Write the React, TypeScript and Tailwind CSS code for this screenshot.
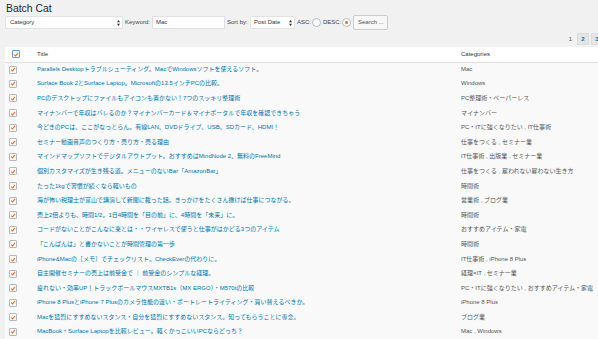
const posts = [
    { title: "Parallels Desktopトラブルシューティング。MacでWindowsソフトを使えるソフト。", cats: "Mac" },
    { title: "Surface Book 2とSurface Laptop。Microsoftの13.5インチPCの比較。", cats: "Windows" },
    { title: "PCのデスクトップにファイルもアイコンも置かない！7つのスッキリ整理術", cats: "PC整理術・ペーパーレス" },
    { title: "マイナンバーで年収はバレるのか？マイナンバーカード＆マイナポータルで年収を確認できちゃう", cats: "マイナンバー" },
    { title: "今どきのPCは、ここがなっとらん。有線LAN、DVDドライブ、USB、SDカード、HDMI！", cats: "PC・ITに強くなりたい , IT仕事術" },
    { title: "セミナー動画音声のつくり方・売り方・売る理由", cats: "仕事をつくる , セミナー業" },
    { title: "マインドマップソフトでデジタルアウトプット。おすすめはMindNode 2、無料のFreeMind", cats: "IT仕事術 , 出版業 , セミナー業" },
    { title: "個別カスタマイズが生き残る道。メニューのないBar「AmazonBar」", cats: "仕事をつくる , 雇われない雇わない生き方" },
    { title: "たった1kgで習慣が続くなら軽いもの", cats: "時間術" },
    { title: "海が怖い税理士が富山で講演して新聞に載った話。きっかけをたくさん撒けば仕事につながる。", cats: "営業術 , ブログ業" },
    { title: "売上2倍よりも、時間1/2。1日4時間を「目の前」に、4時間を「未来」に。", cats: "時間術" },
    { title: "コードがないことがこんなに楽とは・・ワイヤレスで使うと仕事がはかどる3つのアイテム", cats: "おすすめアイテム・家電" },
    { title: "「こんばんは」と書かないことが時間管理の第一歩", cats: "時間術" },
    { title: "iPhone&Macの［メモ］でチェックリスト。CheckEverの代わりに。", cats: "IT仕事術 , iPhone 8 Plus" },
    { title: "自主開催セミナーの売上は前受金で ｜ 前受金のシンプルな経理。", cats: "経理×IT , セミナー業" },
    { title: "疲れない・効率UP！トラックボールマウスMXTB1s（MX ERGO）・M570tの比較", cats: "PC・ITに強くなりたい , おすすめアイテム・家電" },
    { title: "iPhone 8 PlusとiPhone 7 Plusのカメラ性能の違い・ポートレートライティング・買い替えるべきか。", cats: "iPhone 8 Plus" },
    { title: "Macを猛烈にすすめないスタンス・自分を猛烈にすすめないスタンス。知ってもらうことに専念。", cats: "ブログ業" },
    { title: "MacBook・Surface Laptopを比較レビュー。軽くかっこいいPCならどっち？", cats: "Mac , Windows" },
];

function Check({ header }: { header?: boolean }) {
    return (
        <span
            className={
                "flex items-center justify-center w-[8px] h-[8px] bg-white rounded-[1px] border " +
                (header ? "border-[#5b9dd9]" : "border-[#b4b9be]")
            }
        >
            <svg viewBox="0 0 10 10" className="w-[7px] h-[7px]">
                <path d="M2 5.2 L4.2 7.4 L8.4 2.2" fill="none" stroke="#ef6a2c" strokeWidth="1.8" />
            </svg>
        </span>
    );
}

function Radio({ on }: { on?: boolean }) {
    return (
        <span className="flex items-center justify-center w-[9px] h-[9px] rounded-full bg-white border border-[#b4b9be]">
            {on && <span className="w-[3px] h-[3px] rounded-full bg-[#ef6a2c]" />}
        </span>
    );
}

// select arrows (up/down)
function Arrows() {
    return (
        <svg viewBox="0 0 4 8" className="w-[3px] h-[6px] shrink-0">
            <path d="M0 3 L2 0 L4 3 Z M0 5 L2 8 L4 5 Z" fill="#333" />
        </svg>
    );
}

export default function App() {
    return (
        <div
            className="w-[598px] h-[339px] overflow-hidden bg-[#f1f1f1] text-[#444]"
            style={{ fontFamily: '"Liberation Sans", "Noto Sans CJK JP", sans-serif' }}
        >
            <div className="w-[612px] pl-[5px]">
                <h1 className="text-[10.4px] leading-[12px] pt-[3px] pl-[1px] text-[#23282d]">Batch Cat</h1>

                <div className="flex items-center h-[15px] text-[6px] text-[#444] whitespace-nowrap">
                    <div className="flex items-center justify-between w-[118px] h-[13px] bg-white border border-[#e2e2e2] rounded-[2px] pl-[4px] pr-[2px] text-[#32373c]">
                        Category
                        <Arrows />
                    </div>
                    <span className="ml-[2px] w-[25px]">Keyword:</span>
                    <div className="ml-[2px] flex items-center w-[73px] h-[13px] bg-white border border-[#e0e0e0] pl-[3px] text-[#32373c]">
                        Mac
                    </div>
                    <span className="ml-[2px] w-[21px]">Sort by:</span>
                    <div className="ml-[2px] flex items-center justify-between w-[45px] h-[13px] bg-white border border-[#e2e2e2] rounded-[2px] pl-[3px] pr-[2px] text-[#32373c]">
                        Post Date
                        <Arrows />
                    </div>
                    <span className="ml-[2px]">ASC:</span>
                    <span className="ml-[1px]"><Radio /></span>
                    <span className="ml-[2px]">DESC:</span>
                    <span className="ml-[1px]"><Radio on /></span>
                    <div className="ml-[2px] flex items-center justify-center w-[35px] h-[15px] bg-[#f7f7f7] border border-[#cccccc] rounded-[2px] text-[#555]">
                        Search ...
                    </div>
                </div>

                <div className="flex justify-end items-center gap-[2px] h-[14px] mt-[2px] pr-[9px] text-[6px] font-bold">
                    <span className="text-[#555] mr-[3px] font-normal">1</span>
                    <span className="flex items-center justify-center w-[12px] h-[12px] bg-[#e5e5e5] border border-[#ddd] text-[#0073aa]">2</span>
                    <span className="flex items-center justify-center w-[12px] h-[12px] bg-[#e5e5e5] border border-[#ddd] text-[#0073aa]">3</span>
                </div>

                <table className="table-fixed w-full border-collapse mt-px text-[6px]">
                    <colgroup>
                        <col className="w-[28px]" />
                        <col className="w-[424px]" />
                        <col />
                    </colgroup>
                    <thead>
                        <tr className="bg-white h-[15px] border-b border-[#e1e1e1]">
                            <th className="pl-[7px] align-middle"><Check header /></th>
                            <th className="pl-[4px] text-left font-normal text-[#32373c]">Title</th>
                            <th className="pl-[4px] text-left font-normal text-[#32373c]">Categories</th>
                        </tr>
                    </thead>
                    <tbody>
                        {posts.map((post, index) => {
                            return (
                                <tr key={index} className="bg-[#f9f9f9] h-[14.6px]">
                                    <td className="pl-[4px] align-middle"><Check /></td>
                                    <td className="pl-[4px] text-[#0073aa] whitespace-nowrap overflow-hidden">{post.title}</td>
                                    <td className="pl-[4px] text-[#555] whitespace-nowrap">{post.cats}</td>
                                </tr>
                            )
                        })}
                    </tbody>
                </table>
            </div>
        </div>
    )
}
